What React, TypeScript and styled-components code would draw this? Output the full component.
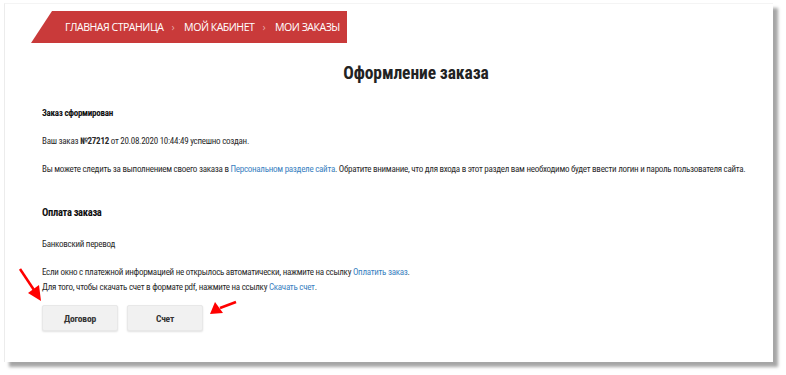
import React from 'react';
import styled, {createGlobalStyle} from "styled-components";

const narrow = `"Noto Sans Condensed", "Roboto Condensed", "DejaVu Sans Condensed", sans-serif`

const GlobalStyle = createGlobalStyle`
  html, body {
    margin: 0;
    padding: 0;
    background: #fff;
  }
  body {
    font-family: ${narrow};
    color: #222;
  }
`

export default function App() {
    const crumbs = ['Главная страница', 'Мой кабинет', 'Мои заказы']
    return (
        <Page>
            <GlobalStyle/>
            <Panel>
                <Breadcrumbs>
                    {crumbs.map((item, index) => <React.Fragment key={index}>
                        {index > 0 && <Separator>›</Separator>}
                        <Crumb>{item}</Crumb>
                    </React.Fragment>)}
                </Breadcrumbs>
                <Title>Оформление заказа</Title>
                <Content>
                    <SubTitle>Заказ сформирован</SubTitle>
                    <Text>Ваш заказ <b>№27212</b> от 20.08.2020 10:44:49 успешно создан.</Text>
                    <Text>
                        Вы можете следить за выполнением своего заказа в <Link href="">Персональном разделе сайта</Link>.
                        Обратите внимание, что для входа в этот раздел вам необходимо будет ввести логин и пароль пользователя сайта.
                    </Text>
                    <SectionTitle>Оплата заказа</SectionTitle>
                    <Text $gap={18}>Банковский перевод</Text>
                    <Notes>
                        <div>Если окно с платежной информацией не открылось автоматически, нажмите на ссылку <Link href="">Оплатить заказ</Link>.</div>
                        <div>Для того, чтобы скачать счет в формате pdf, нажмите на ссылку <Link href="">Скачать счет</Link>.</div>
                    </Notes>
                    <Buttons>
                        <Button>Договор</Button>
                        <Button>Счет</Button>
                    </Buttons>
                </Content>
            </Panel>
            <Arrows width="786" height="375" viewBox="0 0 786 375">
                <line x1="20" y1="269" x2="34" y2="290" stroke="#f00" strokeWidth="2.5"/>
                <polygon points="41,301 28,293 39,285" fill="#f00"/>
                <line x1="236" y1="302" x2="220" y2="308" stroke="#f00" strokeWidth="2.5"/>
                <polygon points="210,314 215,302 223,313" fill="#f00"/>
            </Arrows>
        </Page>
    );
};

const Page = styled.div`
  position: relative;
  width: 786px;
  height: 375px;
  padding: 3px 0 0 4px;
  box-sizing: border-box;
`
const Panel = styled.div`
  width: 769px;
  height: 359px;
  background: #fff;
  border-left: 1px solid #ececec;
  border-top: 1px solid #f4f4f4;
  box-sizing: border-box;
  box-shadow: 5px 5px 3px rgba(0, 0, 0, 0.35);
  padding-top: 7px;
`
const Breadcrumbs = styled.div`
  margin-left: 26px;
  width: 316px;
  height: 32px;
  background: #c93a3a;
  clip-path: polygon(21px 0, 100% 0, 100% 100%, 0 100%);
  display: flex;
  align-items: center;
  padding-left: 34px;
  box-sizing: border-box;
  gap: 8px;
  font-family: "Open Sans", sans-serif;
  font-size: 10.6px;
  letter-spacing: -0.5px;
  text-transform: uppercase;
  white-space: nowrap;
`
const Crumb = styled.span`
  color: #fff;
`
const Separator = styled.span`
  color: #e6a8a8;
  padding-right: 2px;
`
const Title = styled.h1`
  margin: 19px 0 0 0;
  padding-left: 54px;
  text-align: center;
  font-family: ${narrow};
  font-size: 17.5px;
  line-height: 22px;
  font-weight: 700;
  letter-spacing: -0.1px;
  color: #222;
`
const Content = styled.div`
  padding-left: 37px;
  font-size: 9px;
  letter-spacing: -0.27px;
  line-height: 12px;
  color: #2a2a2a;
`
const SubTitle = styled.div`
  margin-top: 23px;
  font-weight: 700;
  color: #111;
`
const Text = styled.p<{$gap?: number}>`
  margin: ${props => props.$gap ?? 16}px 0 0;
`
const SectionTitle = styled.div`
  margin-top: 31px;
  font-weight: 700;
  font-size: 10.5px;
  letter-spacing: -0.3px;
  line-height: 14px;
  color: #111;
`
const Notes = styled.div`
  margin-top: 15px;
  line-height: 15px;
`
const Link = styled.a`
  color: #3a7fc1;
  text-decoration: none;
`
const Buttons = styled.div`
  display: flex;
  gap: 9px;
  margin-top: 10px;
`
const Button = styled.button`
  width: 76px;
  height: 26px;
  border: 1px solid #e8e8e8;
  border-radius: 2px;
  background: #f1f1f1;
  box-shadow: 0 1px 2px rgba(0, 0, 0, 0.12);
  font-family: ${narrow};
  font-size: 9.5px;
  letter-spacing: -0.2px;
  font-weight: 700;
  color: #333;
`
const Arrows = styled.svg`
  position: absolute;
  left: 0;
  top: 0;
  pointer-events: none;
`
